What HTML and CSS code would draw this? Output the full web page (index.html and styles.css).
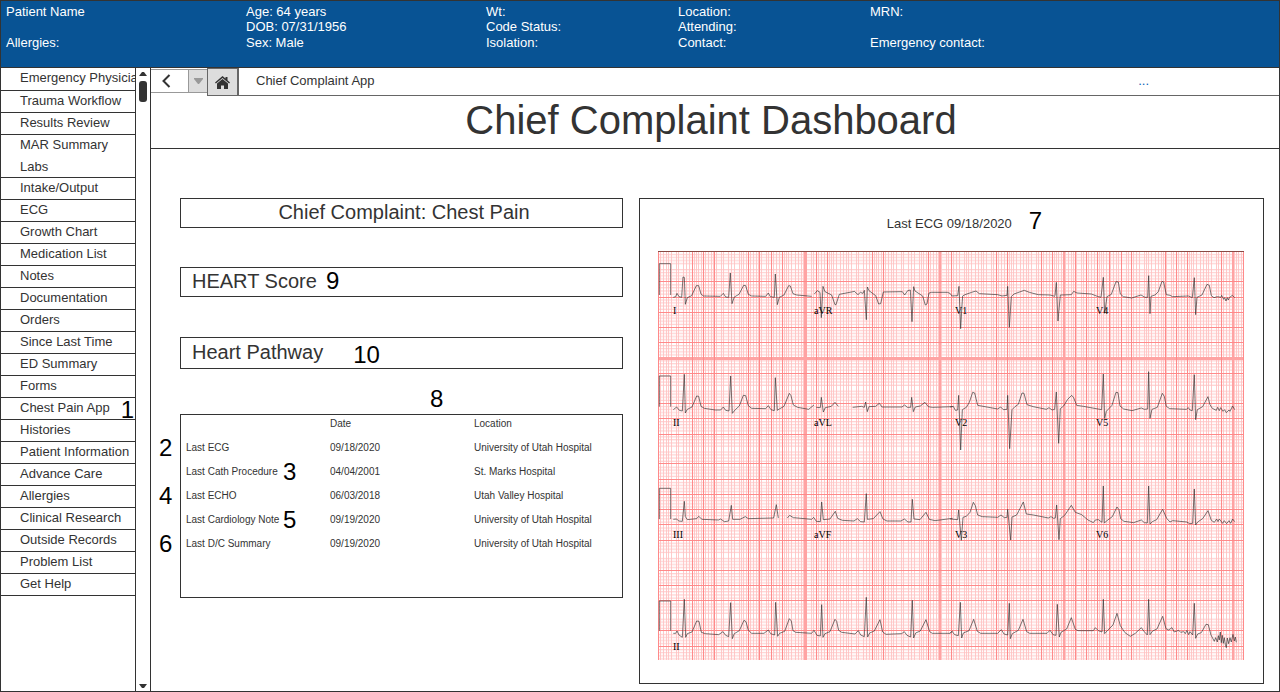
FILE: index.html
```html
<!DOCTYPE html>
<html lang="en">
<head>
<meta charset="utf-8">
<title>Chief Complaint Dashboard</title>
<link rel="stylesheet" href="styles.css">
</head>
<body>
<div class="app">
  <header class="banner">
    <div class="banner-col"><span>Patient Name</span><span></span><span>Allergies:</span></div>
    <div class="banner-col"><span>Age: 64 years</span><span>DOB: 07/31/1956</span><span>Sex: Male</span></div>
    <div class="banner-col"><span>Wt:</span><span>Code Status:</span><span>Isolation:</span></div>
    <div class="banner-col"><span>Location:</span><span>Attending:</span><span>Contact:</span></div>
    <div class="banner-col"><span>MRN:</span><span></span><span>Emergency contact:</span></div>
  </header>
  <div class="body">
    <nav class="menu" aria-label="Chart sections">
      <a href="#" class="tall">Emergency Physician</a>
      <a href="#">Trauma Workflow</a>
      <a href="#">Results Review</a>
      <a href="#" class="joined">MAR Summary</a>
      <a href="#" class="short">Labs</a>
      <a href="#">Intake/Output</a>
      <a href="#">ECG</a>
      <a href="#">Growth Chart</a>
      <a href="#">Medication List</a>
      <a href="#">Notes</a>
      <a href="#">Documentation</a>
      <a href="#">Orders</a>
      <a href="#">Since Last Time</a>
      <a href="#">ED Summary</a>
      <a href="#">Forms</a>
      <a href="#">Chest Pain App<span class="mark mark-menu">1</span></a>
      <a href="#">Histories</a>
      <a href="#">Patient Information</a>
      <a href="#">Advance Care</a>
      <a href="#">Allergies</a>
      <a href="#">Clinical Research</a>
      <a href="#">Outside Records</a>
      <a href="#">Problem List</a>
      <a href="#">Get Help</a>
    </nav>
    <div class="scroll">
      <svg width="8" height="4" viewBox="0 0 8 4"><path d="M0 4L3 0h2l3 4z" fill="#333"/></svg>
      <div class="thumb"></div>
      <svg class="down" width="8" height="4" viewBox="0 0 8 4"><path d="M0 0h8L5 4H3z" fill="#333"/></svg>
    </div>
    <main class="main">
      <div class="toolbar">
        <button class="back" aria-label="Back"><svg width="9" height="14" viewBox="0 0 9 14"><path d="M7.500 1L1.500 7l6 6" fill="none" stroke="#333" stroke-width="2"/></svg></button>
        <button class="drop" aria-label="History"><svg width="9" height="6" viewBox="0 0 9 6"><path d="M0 0h9v1L5 6H4L0 1z" fill="#999"/></svg></button>
        <button class="home" aria-label="Home"><svg width="15" height="13" viewBox="0 0 15 13"><path d="M7.500 0L10.500 2.500V1h2v3.200L15 6.500l-.9 1.100-6.600-5.500L.9 7.600 0 6.500z" fill="#333"/><path d="M7.500 2.900L13 7.500V13H9V9.500H6V13H2V7.500z" fill="#333"/></svg></button>
        <div class="crumb"><span>Chief Complaint App</span><a href="#" aria-label="More">...</a></div>
      </div>
      <h1>Chief Complaint Dashboard</h1>
      <div class="content">
        <section class="left">
          <h2 class="box center">Chief Complaint: Chest Pain</h2>
          <h2 class="box score">HEART Score<span class="num">9</span></h2>
          <h2 class="box pathway">Heart Pathway<span class="num">10</span></h2>
          <div class="records">
            <span class="mark mark-records">8</span>
            <table>
              <thead><tr><th></th><th>Date</th><th>Location</th></tr></thead>
              <tbody>
                <tr><td><span class="mark outside">2</span>Last ECG</td><td>09/18/2020</td><td>University of Utah Hospital</td></tr>
                <tr><td>Last Cath Procedure<span class="mark inside">3</span></td><td>04/04/2001</td><td>St. Marks Hospital</td></tr>
                <tr><td><span class="mark outside">4</span>Last ECHO</td><td>06/03/2018</td><td>Utah Valley Hospital</td></tr>
                <tr><td>Last Cardiology Note<span class="mark inside">5</span></td><td>09/19/2020</td><td>University of Utah Hospital</td></tr>
                <tr><td><span class="mark outside">6</span>Last D/C Summary</td><td>09/19/2020</td><td>University of Utah Hospital</td></tr>
              </tbody>
            </table>
          </div>
        </section>
        <section class="ecg">
          <div class="ecg-title">Last ECG 09/18/2020<span class="num">7</span></div>
          <svg class="strip" viewBox="0 0 586 409" role="img" aria-label="Twelve lead ECG">
            <defs>
              <pattern id="fine" width="45" height="15.200" patternUnits="userSpaceOnUse">
                <path d="M2.500 0v16M5.500 0v16M8.500 0v16M10.500 0v16M13.500 0v16M18.500 0v16M20.500 0v16M25.500 0v16M28.500 0v16M31.500 0v16M36.500 0v16M38.500 0v16M40.500 0v16M43.500 0v16" stroke="#ffcaca"/>
                <path d="M0 3.500h45M0 6.500h45M0 9.500h45M0 12.500h45" stroke="#ffc4c4"/>
              </pattern>
            </defs>
            <g shape-rendering="crispEdges" fill="none">
              <rect width="586" height="409" fill="#fff"/>
              <rect width="586" height="409" fill="url(#fine)"/>
              <path d="M146 0h3v409h-3zM281 0h2v409h-2zM405 0h2v409h-2zM574 0h2v409h-2zM0 106h586v3H0z" fill="#ffa3a3"/>
              <path d="M.5 0v409M34.500 0v409M45.500 0v409M56.500 0v409M90.500 0v409M101.500 0v409M113.500 0v409M124.500 0v409M158.500 0v409M169.500 0v409M214.500 0v409M225.500 0v409M270.500 0v409M293.500 0v409M338.500 0v409M349.500 0v409M383.500 0v409M394.500 0v409M417.500 0v409M428.500 0v409M439.500 0v409M451.500 0v409M463.500 0v409M473.500 0v409M507.500 0v409M518.500 0v409M529.500 0v409M563.500 0v409M585.500 0v409" stroke="#ff8a8a"/>
              <path d="M0 30.500h586M0 46.500h586M0 61.500h586M0 76.500h586M0 91.500h586M0 122.500h586M0 152.500h586M0 167.500h586M0 183.500h586M0 212.500h586M0 228.500h586M0 243.500h586M0 258.500h586M0 273.500h586M0 289.500h586M0 319.500h586M0 334.500h586M0 349.500h586M0 379.500h586M0 395.500h586" stroke="#ff8a8a"/>
              <path d="M0 .5h586" stroke="#8a4a44"/>
            </g>
            <g class="trace">
              <g transform="translate(-3 -6) scale(.3333)">
                <path d="M13 150V56H47V150M55 157L62 155 66 145 72 155 80 157 84 96 88 97 91 178 97 158 110 152 124 122 131 122 138 147 145 153 196 154 205 145 212 156 221 157 226 84 231 176 238 156 252 148 266 121 272 122 280 148 290 153 332 154 340 144 346 155 358 157 361 87 367 179 373 157 387 150 401 122 406 123 414 146 425 150 470 154M478 147L487 137 495 142 499 218 504 124 510 140 530 150 540 179 543 179 553 148 600 139"/>
              </g>
              <g transform="translate(197 -6) scale(.3333)">
                <path d="M0 141L9 149 16 142 24 145 28 136 34 224 37 126 42 137 62 152 71 177 77 176 85 141 142 140 149 150 158 137 166 135 171 230 176 125 180 138 203 153 211 180 216 177 222 144 230 142 277 142 285 145 291 153 308 152 312 124 317 251 321 181 323 153 330 149 350 142 363 138 373 146 428 149 441 153 456 151 458 124 463 247 469 155 477 147 508 136 523 142 550 149 585 150 600 154"/>
              </g>
              <g transform="translate(397 -6) scale(.3333)">
                <path d="M0 152L4 112 9 228 16 150 49 149 56 139 66 144 109 147 127 154 138 157 145 97 149 205 156 155 169 148 183 110 190 111 196 147 205 155 230 159 258 150 270 157 278 157 281 92 285 206 288 154 300 150 310 140 321 109 326 111 334 149 345 151 353 155 400 153 412 158 418 98 422 209 426 157 441 150 456 118 463 121 469 152 477 158 487 155 498 157 500 151 506 163 509 158 513 168 517 158 520 165 523 158 532 151 539 158"/>
              </g>
              <g transform="translate(-3 119) scale(.3333)">
                <path d="M13 110V18H47V110M55 119L65 111 73 121 82 123 88 13 91 129 97 118 111 111 125 78 131 79 138 109 148 115 181 120 197 120 205 111 212 121 222 123 227 18 232 130 241 119 253 108 265 76 272 77 280 107 290 115 332 116 340 107 348 119 358 122 361 23 367 121 373 117 387 109 403 70 408 77 415 105 428 112 461 118 477 105M484 112L496 113 499 82 505 126 511 113 529 109 540 97 550 109M593 112L620 109 628 112 632 96 637 125 642 110 662 109 673 100 681 111 741 111 749 105 757 112 767 112 770 82 775 125 781 111 796 108 810 97 820 110 832 112 893 110"/>
                <path d="M13 447V355H47V447M55 448L65 447 71 453 82 454 88 394 91 440 97 449 125 446 131 439 141 448 191 450 197 447 208 455 221 453 229 406 233 448 255 448 271 440 280 446 356 444 364 404 370 444M397 444L404 436 415 443 470 448 476 442 484 454 496 455 500 396 505 449 525 447 541 424 548 445 562 451 597 453 607 446 617 455 628 456 634 371 637 448 655 446 675 425 684 447 696 453 738 453 748 447 759 456 768 456 772 388 777 447 795 449 813 427 823 448 840 452 893 445"/>
              </g>
              <g transform="translate(292 119) scale(.3333)">
                <path d="M0 111L10 109 16 121 23 120 26 76 32 240 37 119 49 112 58 97 68 67 74 69 83 106 105 110 143 117 152 111 160 119 171 118 173 76 179 236 186 119 195 110 205 103 216 69 222 70 231 104 250 110 289 118 297 113 306 120 314 118 319 66 326 220 331 116 341 108 353 88 365 76 371 83 380 106 400 109 455 119 460 12 464 145 469 124 486 106 498 67 504 68 510 108 521 117 546 122 574 114 583 118 593 117 596 5 600 145 606 118 622 112 637 70 643 79 649 109 659 116 709 118 715 113 720 120 727 122 733 14 737 149 742 119 758 110 774 80 780 104 787 115 799 121 803 112 808 122 812 113 819 124 824 119 829 128 837 120 840 124 848 108 854 119"/>
                <path d="M0 447L23 449 26 420 34 511 39 442 49 439 60 427 70 397 76 407 83 435 97 440 143 442 153 435 163 443 171 442 173 418 182 510 186 441 200 435 220 396 229 432 250 435 295 444 303 440 311 445 316 444 320 405 327 509 331 446 344 436 364 406 376 427 395 434 414 450 430 458 436 450 445 449 456 457 460 348 463 459 471 452 487 440 501 411 507 419 512 446 522 454 551 458 574 450 583 458 592 459 596 348 600 462 607 455 620 449 638 418 650 445 660 456 668 452 710 456 719 461 728 460 733 357 737 465 743 456 758 446 774 422 784 451 793 457 800 447 804 455 808 447 818 460 823 452 830 461 837 452 842 460 848 447 854 455"/>
              </g>
              <g transform="translate(-3 289) scale(.3333)">
                <path d="M13 272V183H47V272M55 280L62 280 66 273 72 285 82 292 88 178 92 292 97 281 111 276 125 243 132 244 139 277 151 281 191 284 204 275 212 286 221 290 227 188 232 296 238 281 253 272 267 241 273 245 280 271 290 280 327 280 340 270 347 281 359 285 362 187 368 289 374 280 389 274 403 236 409 243 414 272 422 277 470 280 477 271 486 286 496 288 500 194 504 292 510 281 525 275 540 238 545 244 551 271 560 277 600 282 610 272 617 285 628 290 634 172 638 291 644 279 658 273 675 239 683 276 693 283 740 281 748 275 756 286 767 291 772 181 776 294 782 279 796 273 813 239 824 275 832 280 885 280 893 273"/>
              </g>
              <g transform="translate(292 289) scale(.3333)">
                <path d="M0 280L6 274 14 284 25 287 31 187 35 294 40 279 57 272 71 238 82 274 92 280 143 280 154 269 162 282 173 285 178 190 181 296 187 281 205 271 219 238 230 275 239 280 291 280 300 271 309 284 318 286 322 193 328 291 333 277 350 267 364 233 376 268 384 272 430 272 436 263 445 272 456 276 460 178 464 281 473 271 489 255 501 220 511 257 525 278 541 289 556 280 574 263 582 274 592 285 596 178 600 284 608 273 621 267 638 229 648 266 656 270 666 263 673 276 686 271 692 277 701 275 706 281 711 271 716 284 720 275 728 285 733 190 737 295 743 282 754 278 768 253 775 254 783 285 793 304 797 293 802 306 805 287 808 300 811 276 814 308 817 286 820 310 823 293 826 313 829 323 832 294 836 311 840 293 844 306 849 283 853 303 856 291 859 307"/>
              </g>
            </g>
            <g class="leads">
              <text x="15" y="63">I</text><text x="156" y="63">aVR</text><text x="297" y="63">V1</text><text x="438" y="63">V4</text>
              <text x="15" y="175">II</text><text x="156" y="175">aVL</text><text x="297" y="175">V2</text><text x="438" y="175">V5</text>
              <text x="15" y="287">III</text><text x="156" y="287">aVF</text><text x="297" y="287">V3</text><text x="438" y="287">V6</text>
              <text x="15" y="399">II</text>
            </g>
          </svg>
        </section>
      </div>
    </main>
  </div>
</div>
</body>
</html>
```
FILE: styles.css
```css
* { box-sizing: border-box; }
body {
  margin: 0;
  font: 13px/16px "Liberation Sans", Arial, sans-serif;
  color: #333;
  background: #fff;
}
a { color: inherit; text-decoration: none; }
button { margin: 0; padding: 0; font: inherit; }
.app {
  min-height: 100vh;
  display: flex;
  flex-direction: column;
  border: 1px solid #333;
}
.banner {
  display: grid;
  grid-template-columns: 240fr 240fr 192fr 192fr 409fr;
  height: 67px;
  padding: 3px 0 0 5px;
  color: #fff;
  background: #085394;
  border-bottom: 1px solid #333;
}
.banner-col { display: grid; grid-template-rows: 15px 16px 16px; align-content: start; }
.body { flex: 1; display: flex; }
.menu { width: 134px; flex: none; overflow: hidden; }
.menu a {
  position: relative;
  display: block;
  height: 22px;
  padding: 2px 0 0 19px;
  line-height: 16px;
  white-space: nowrap;
  border-bottom: 1px solid #333;
}
.menu a.tall { height: 23px; }
.menu a.joined { border-bottom: 0; }
.menu a.short { height: 21px; }
.mark, .num { font-size: 24px; line-height: 24px; color: #000; }
.mark { position: absolute; }
.mark-menu { right: 1px; top: 0; }
.scroll {
  width: 16px;
  flex: none;
  display: flex;
  flex-direction: column;
  align-items: center;
  padding: 4px 0 3px;
  border: solid #333;
  border-width: 0 1px;
}
.thumb { width: 8px; height: 21px; margin-top: 5px; border-radius: 3px; background: #333; }
.down { margin-top: auto; }
.main { flex: 1; min-width: 0; }
.toolbar { display: flex; align-items: flex-start; height: 28px; }
.toolbar button { display: flex; align-items: center; justify-content: center; }
.toolbar .back {
  width: 37px;
  height: 24px;
  margin-top: 1px;
  padding-right: 6px;
  background: #fff;
  border: solid #999;
  border-width: 1px 0;
}
.toolbar .drop {
  width: 19px;
  height: 24px;
  margin-top: 1px;
  background: #ddd;
  border: solid #999;
  border-width: 1px 0 1px 1px;
}
.toolbar .home {
  width: 32px;
  height: 28px;
  background: #ddd;
  border: 1px solid #666;
  border-right-width: 2px;
}
.crumb {
  flex: 1;
  display: flex;
  justify-content: space-between;
  height: 28px;
  padding: 5px 130px 0 17px;
  border-bottom: 1px solid #666;
}
.crumb a { color: #0b62b5; }
h1 {
  margin: 0;
  height: 53px;
  padding-right: 8px;
  font-size: 40px;
  line-height: 48px;
  font-weight: 400;
  text-align: center;
  border-bottom: 1px solid #333;
}
.content {
  display: grid;
  grid-template-columns: minmax(0, 443fr) minmax(0, 625fr);
  align-items: start;
  gap: 16px;
  padding: 49px 15px 7px 29px;
}
.box {
  display: flex;
  align-items: center;
  height: 30px;
  margin: 0 0 39px;
  padding: 0 11px 2px;
  font-size: 20px;
  line-height: 24px;
  font-weight: 400;
  border: 1px solid #333;
}
.center { justify-content: center; padding-left: 16px; }
.score { gap: 9px; margin-bottom: 40px; }
.pathway { gap: 30px; height: 32px; margin-bottom: 45px; }
.pathway .num { padding-top: 5px; }
.records { position: relative; height: 184px; padding-left: 5px; border: 1px solid #333; }
.mark-records { left: 249px; top: -28px; }
table { width: 100%; table-layout: fixed; border-collapse: collapse; font-size: 10px; line-height: 12px; }
th, td { position: relative; height: 24px; padding: 0; text-align: left; font-weight: 400; }
th { height: 21px; padding-bottom: 3px; }
th:nth-child(-n+2) { width: 144px; }
.outside { left: -27px; top: 0; }
.inside { left: 97px; top: 0; }
.ecg { padding: 8px 19px 23px 18px; border: 1px solid #333; }
.ecg-title {
  display: flex;
  align-items: center;
  justify-content: center;
  gap: 17px;
  height: 44px;
  padding: 6px 0 16px 27px;
}
.ecg-title .num { padding-bottom: 6px; }
.strip { display: block; width: 100%; }
.trace path { fill: none; stroke: #333; stroke-width: 2px; }
.leads { font: 10px "Liberation Serif", serif; fill: #000; }
```
